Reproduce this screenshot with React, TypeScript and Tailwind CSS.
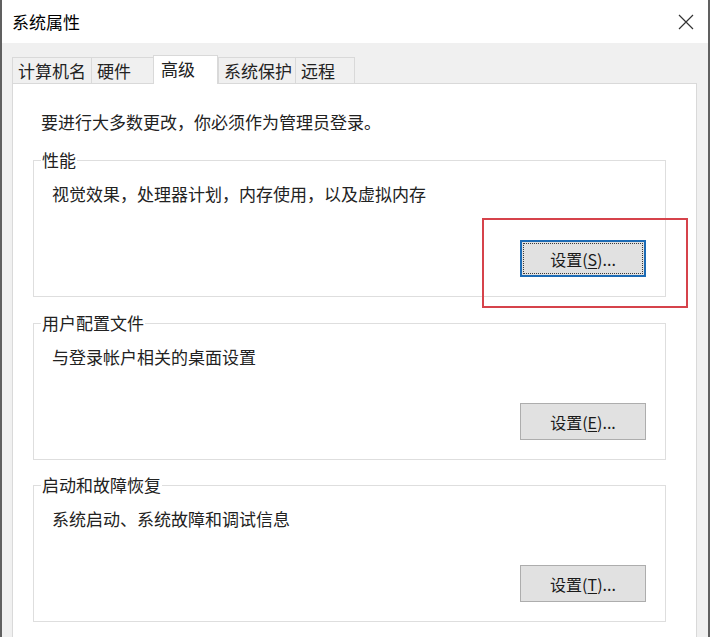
import React from 'react';

const tabs = [
  { id: 'name', label: '计算机名', width: 'w-[80px]' },
  { id: 'hw', label: '硬件', width: 'w-[63px]' },
  { id: 'adv', label: '高级', width: 'w-[65px]' },
  { id: 'prot', label: '系统保护', width: 'w-[78px]' },
  { id: 'remote', label: '远程', width: 'w-[60px]' },
];

const groups = [
  { id: 'perf', title: '性能', desc: '视觉效果，处理器计划，内存使用，以及虚拟内存', key: 'S', focused: true, gap: 'mt-0' },
  { id: 'profile', title: '用户配置文件', desc: '与登录帐户相关的桌面设置', key: 'E', focused: false, gap: 'mt-[26px]' },
  { id: 'startup', title: '启动和故障恢复', desc: '系统启动、系统故障和调试信息', key: 'T', focused: false, gap: 'mt-[25px]' },
];

const SettingsButton = ({ hotkey, focused }: { hotkey: string; focused: boolean }) => (
  <button
    className={
      focused
        ? 'w-[126px] h-[37px] bg-[#e1e1e1] border-2 border-[#1c6bb5] outline outline-1 outline-dotted outline-[#3a3a3a] outline-offset-[-4px] text-[16px] text-[#1a1a1a] flex items-center justify-center'
        : 'w-[126px] h-[37px] bg-[#e1e1e1] border border-[#adadad] text-[16px] text-[#1a1a1a] flex items-center justify-center'
    }
  >
    设置(<span className="underline underline-offset-2">{hotkey}</span>)...
  </button>
);

const App = () => {
  return (
    <div className="relative w-[710px] h-[637px] overflow-hidden bg-[#f0f0f0] border-l-2 border-r-2 border-[#606060] font-['Noto_Sans_CJK_SC',sans-serif] text-[#222]">
      {/* title bar */}
      <div className="h-[43px] bg-white flex items-center justify-between pl-[10px] pr-[12px]">
        <span className="text-[17px] leading-[24px] text-black">系统属性</span>
        <svg width="16" height="16" viewBox="0 0 16 16" className="mr-[2px]">
          <path d="M1 1 L15 15 M15 1 L1 15" stroke="#333" strokeWidth="1.2" fill="none" />
        </svg>
      </div>

      {/* body */}
      <div className="pl-[10px] pt-[12px]">
        {/* tabs */}
        <div className="flex items-end h-[28px]">
          {tabs.map((t) => {
            const active = t.id === 'adv';
            return (
              <div
                key={t.id}
                className={
                  active
                    ? `${t.width} h-[29px] -mb-px relative z-10 bg-white border-t border-l border-r border-[#d9d9d9] pl-[7px] text-[17px] leading-[26px]`
                    : `${t.width} h-[26px] -mr-px bg-[#f0f0f0] border-t border-l border-r border-[#d9d9d9] pl-[5px] text-[17px] leading-[26px]`
                }
              >
                {t.label}
              </div>
            );
          })}
        </div>

        {/* panel */}
        <div className="w-[685px] h-[600px] bg-white border border-[#d9d9d9] pl-[20px] pt-[26px]">
          <p className="pl-[8px] text-[17px] leading-[24px]">要进行大多数更改，你必须作为管理员登录。</p>

          <div className="mt-[26px] flex flex-col">
            {groups.map((g) => (
              <div key={g.id} className={`${g.gap} w-[633px] h-[137px] border border-[#dedede] flex flex-col`}>
                <span className="self-start -mt-[13px] ml-[7px] px-[1px] bg-white text-[17px] leading-[24px]">
                  {g.title}
                </span>
                <p className="mt-[10px] pl-[18px] text-[17px] leading-[24px]">{g.desc}</p>
                <div className="mt-auto self-end mr-[19px] mb-[19px]">
                  <SettingsButton hotkey={g.key} focused={g.focused} />
                </div>
              </div>
            ))}
          </div>
        </div>
      </div>

      {/* red highlight annotation */}
      <div className="absolute left-[480px] top-[218px] w-[206px] h-[90px] border-2 border-[#d6434b]" />
    </div>
  );
};

export default App;
